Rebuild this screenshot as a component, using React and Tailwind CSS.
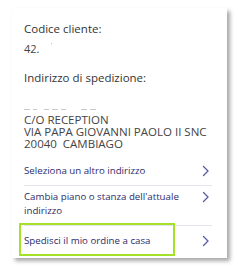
import React from 'react'

function Chevron() {
  return (
    <svg width="8" height="12" viewBox="0 0 8 12" className="shrink-0">
      <path d="M1.5 1.5 L6 6 L1.5 10.5" fill="none" stroke="#5b5ea8" strokeWidth="1.4" strokeLinecap="round" strokeLinejoin="round" />
    </svg>
  )
}

function App() {
  return (
    <div className="w-[244px] h-[271px] bg-white pt-2 pl-3" style={{ fontFamily: '"Open Sans", "Noto Sans", sans-serif' }}>
      <div className="w-[215px] h-[250px] bg-white shadow-[3px_3px_4px_rgba(0,0,0,0.35)] pl-3 pr-[15px] pt-[13px] text-[#333]">
        <div className="leading-4 text-[11.5px]">Codice cliente:</div>
        <div className="leading-4 mt-1 flex items-start text-[11px] text-[#444]">
          42.
          <span className="ml-3 mt-0.5 w-px h-px bg-[#bbb]"></span>
        </div>

        <div className="leading-4 mt-[13px] text-[11.5px]">Indirizzo di spedizione:</div>

        <div className="mt-3 h-3 flex items-end gap-[3px]">
          <span className="w-[6px] h-px bg-[#c9c9c9]"></span>
          <span className="w-[4px] h-px bg-[#c9c9c9]"></span>
          <span className="w-[5px] h-px bg-[#c9c9c9] ml-1"></span>
          <span className="w-[6px] h-px bg-[#c9c9c9]"></span>
          <span className="w-[5px] h-px bg-[#c9c9c9]"></span>
          <span className="w-[6px] h-px bg-[#c9c9c9] ml-3"></span>
          <span className="w-[6px] h-px bg-[#c9c9c9]"></span>
        </div>

        <div className="mt-1 leading-3 text-[11.5px] text-[#444]">
          <div>C/O RECEPTION</div>
          <div>VIA PAPA GIOVANNI PAOLO II SNC</div>
          <div>20040&nbsp; CAMBIAGO</div>
        </div>

        <div className="mt-[7px] text-[9.7px] text-[#2c2b6b]">
          <div className="flex items-center justify-between h-[29px] border-b border-[#e4e4ec] pr-[2px]">
            <span>Seleziona un altro indirizzo</span>
            <Chevron />
          </div>
          <div className="flex items-start justify-between pt-[4px] pb-[7px] border-b border-[#e4e4ec] pr-[2px] leading-[14px]">
            <span>Cambia piano o stanza dell'attuale<br />indirizzo</span>
            <span className="mt-[1px]"><Chevron /></span>
          </div>
          <div className="relative flex items-center justify-between h-[30px] pr-[2px]">
            <span>Spedisci il mio ordine a casa</span>
            <Chevron />
            <div className="absolute left-[-5px] top-[-3px] w-[156px] h-[33px] border-2 border-[#a4e22a]"></div>
          </div>
        </div>
      </div>
    </div>
  )
}

export default App
